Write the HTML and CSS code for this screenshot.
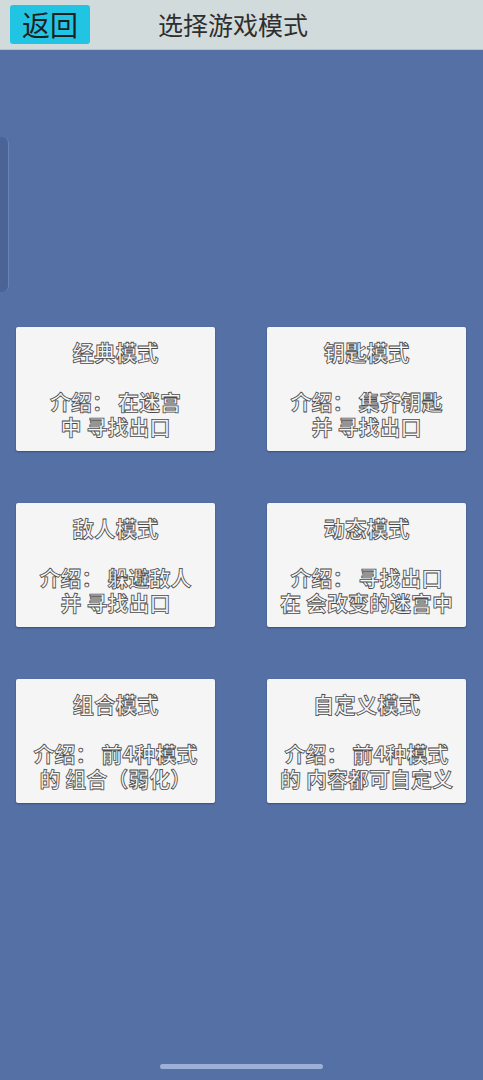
FILE: index.html
```html
<!DOCTYPE html>
<html lang="zh-CN">
<head>
  <meta charset="UTF-8" />
  <meta name="viewport" content="width=device-width, initial-scale=1.0"/>
  <title>选择游戏模式</title>
  <link rel="stylesheet" href="styles.css">
</head>
<body>
  <div class="topbar">
    <button class="back">返回</button>
    <div class="title">选择游戏模式</div>
  </div>

  <div class="page">
    <div class="side-tab"></div>

    <div class="modes">
      <div class="mode">
        <div class="name">经典模式</div>
        <div class="desc">介绍： 在迷宫<br>中 寻找出口</div>
      </div>
      <div class="mode">
        <div class="name">钥匙模式</div>
        <div class="desc">介绍： 集齐钥匙<br>并 寻找出口</div>
      </div>
      <div class="mode">
        <div class="name">敌人模式</div>
        <div class="desc">介绍： 躲避敌人<br>并 寻找出口</div>
      </div>
      <div class="mode">
        <div class="name">动态模式</div>
        <div class="desc">介绍： 寻找出口<br>在 会改变的迷宫中</div>
      </div>
      <div class="mode">
        <div class="name">组合模式</div>
        <div class="desc">介绍： 前4种模式<br>的 组合（弱化）</div>
      </div>
      <div class="mode">
        <div class="name">自定义模式</div>
        <div class="desc">介绍： 前4种模式<br>的 内容都可自定义</div>
      </div>
    </div>

    <div class="home-bar"></div>
  </div>
</body>
</html>
```

FILE: styles.css
```css
body {
  margin: 0;
  padding: 0;
  width: 483px;
  height: 1080px;
  background: #5470a5;
  font-family: "Noto Sans CJK SC", "Noto Sans", sans-serif;
  overflow: hidden;
}

.topbar {
  height: 50px;
  background: #d2dbdc;
  display: flex;
  align-items: center;
  box-sizing: border-box;
  padding-left: 10px;
  border-bottom: 1px solid #b8c2cc;
}

.back {
  width: 80px;
  height: 39px;
  margin-top: -1px;
  padding: 0;
  border: none;
  border-radius: 3px;
  background: #22c4e4;
  color: #1e1e1e;
  font-family: inherit;
  font-size: 28px;
  line-height: 39px;
}

.title {
  margin-left: 68px;
  margin-top: -2px;
  font-size: 25px;
  color: #2f2f2f;
}

.page {
  position: relative;
  height: 1030px;
}

.side-tab {
  position: absolute;
  left: 0;
  top: 87px;
  width: 8px;
  height: 155px;
  background: #4b6497;
  border-right: 1px solid #6a82b4;
  border-radius: 0 6px 6px 0;
}

.modes {
  display: grid;
  grid-template-columns: repeat(2, 199px);
  column-gap: 52px;
  row-gap: 52px;
  padding: 277px 0 0 16px;
}

.mode {
  height: 124px;
  background: #f5f5f5;
  border-radius: 2px;
  box-shadow: 0 1px 2px rgba(0, 0, 0, 0.3);
  display: flex;
  flex-direction: column;
  justify-content: center;
  align-items: center;
  text-align: center;
  color: #f7f7f7;
  font-weight: 700;
  -webkit-text-stroke: 0.8px #4a4a4a;
  line-height: 24.5px;
}

.name {
  font-size: 21.5px;
  margin-bottom: 24.5px;
}

.desc {
  font-size: 21px;
}

.home-bar {
  position: absolute;
  left: 160px;
  top: 1014px;
  width: 163px;
  height: 5px;
  border-radius: 3px;
  background: #9cb0d8;
}
```
